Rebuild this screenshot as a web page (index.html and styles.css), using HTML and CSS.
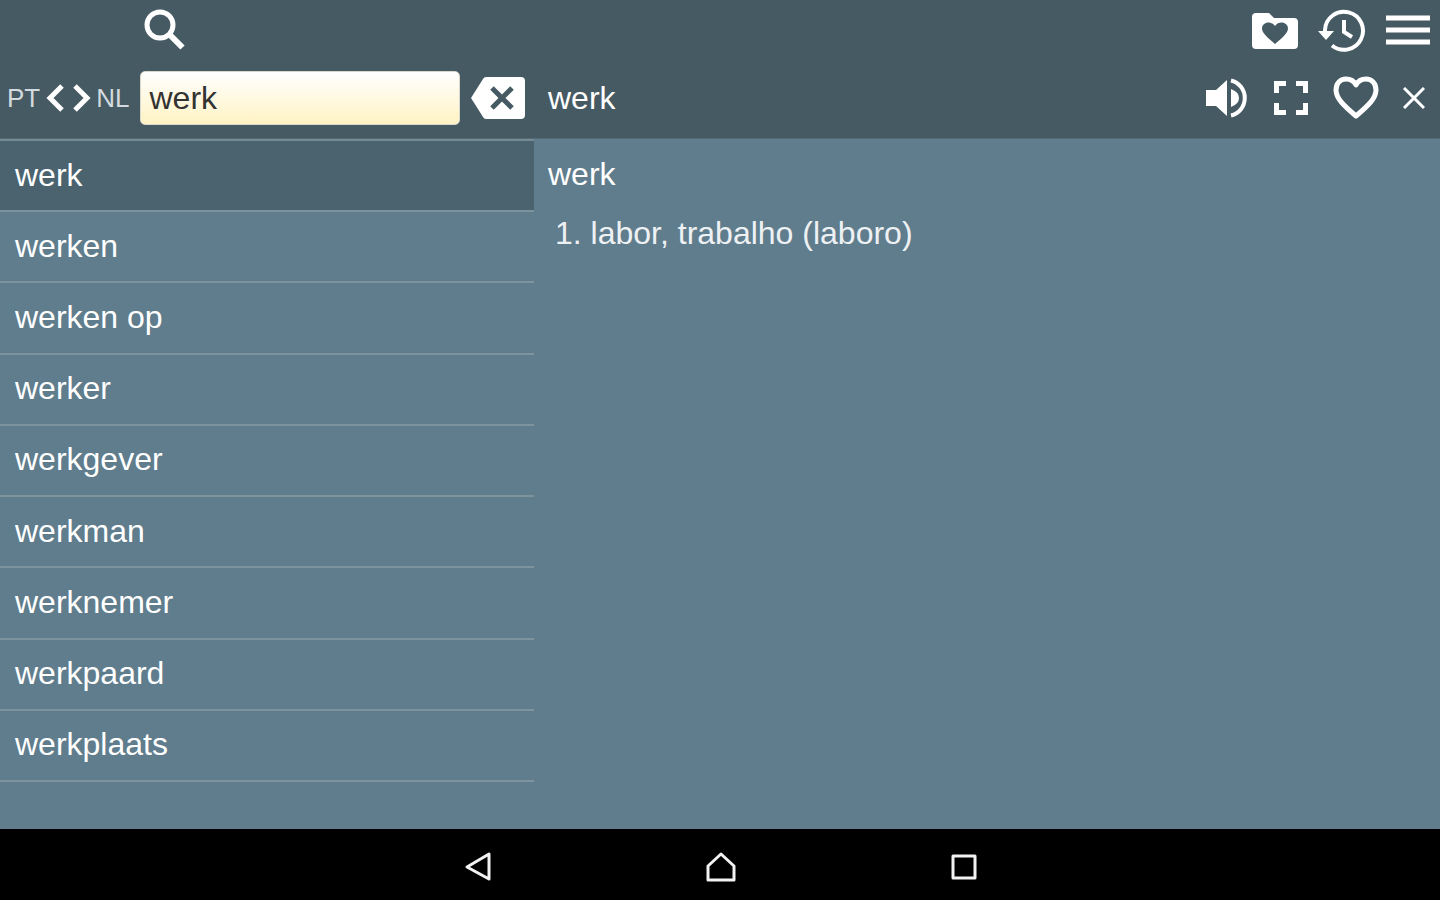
FILE: index.html
```html
<!DOCTYPE html>
<html lang="en">
<head>
    <meta charset="UTF-8">
    <meta name="viewport" content="width=device-width, initial-scale=1.0">
    <title>Dictionary PT - NL</title>
    <link rel="stylesheet" href="styles.css">
</head>
<body>
    <header class="header">
        <div class="tools">
            <button class="icon-btn search-btn" aria-label="Search">
                <svg width="44" height="44" viewBox="0 0 44 44" fill="none" stroke="#fff">
                    <circle cx="16" cy="17" r="13" stroke-width="5"/>
                    <path d="M25 26l13.500 13.500" stroke-width="6"/>
                </svg>
            </button>
        </div>

        <div class="tools tools-right">
            <button class="icon-btn" aria-label="Favorites">
                <svg width="48" height="40" viewBox="0 0 48 40">
                    <path fill="#fff" d="M6 3h13l5 5h20q4 0 4 4v23q0 4-4 4H6q-4 0-4-4V7q0-4 4-4z"/>
                    <path fill="#465a63" d="M25 34C18 28 12 23 12 18.500C12 15 15 12.500 18.500 12.500C21 12.500 23.500 13.500 25 16C26.500 13.500 29 12.500 31.500 12.500C35 12.500 38 15 38 18.500C38 23 32 28 25 34z"/>
                </svg>
            </button>
            <button class="icon-btn" aria-label="History">
                <svg width="48" height="44" viewBox="0 0 48 44" fill="none" stroke="#fff" stroke-width="4">
                    <path d="M7 24V22A19 19 0 1 1 14 37.500"/>
                    <path d="M26 12v12l8 5" stroke-width="4"/>
                    <path d="M0 23h16L8 32z" fill="#fff" stroke="none"/>
                </svg>
            </button>
            <button class="icon-btn" aria-label="Menu">
                <svg width="44" height="32" viewBox="0 0 44 32" stroke="#fff" stroke-width="5">
                    <path d="M0 4h44M0 16h44M0 28h44"/>
                </svg>
            </button>
        </div>

        <div class="search-row">
            <button class="lang-btn" aria-label="Swap languages PT NL">
                <span>PT</span>
                <svg width="46" height="28" viewBox="0 0 46 28" fill="none" stroke="#fff" stroke-width="5">
                    <path d="M17 2L5 14l12 12M30 2l12 12-12 12"/>
                </svg>
                <span>NL</span>
            </button>
            <input class="search-input" type="text" value="werk" aria-label="Word">
            <button class="icon-btn" aria-label="Clear">
                <svg width="54" height="42" viewBox="0 0 54 42">
                    <path fill="#fff" d="M15 0h35q4 0 4 4v34q0 4-4 4H15q-2 0-3-2L0 21 12 2q1-2 3-2z"/>
                    <path fill="none" stroke="#465a63" stroke-width="5" d="M21 11l20 20M41 11L21 31"/>
                </svg>
            </button>
        </div>

        <div class="word-row">
            <h1 class="word-title">werk</h1>
            <div class="word-tools">
                <button class="icon-btn" aria-label="Listen">
                    <svg width="44" height="40" viewBox="0 0 44 40">
                        <path fill="#fff" d="M0 12h10L21 2v36L10 28H0zM25 11q8 3 8 9t-8 9z"/>
                        <path fill="none" stroke="#fff" stroke-width="4" d="M25 2.500A18 18 0 0 1 25 37.500"/>
                    </svg>
                </button>
                <button class="icon-btn" aria-label="Full screen">
                    <svg width="36" height="36" viewBox="0 0 36 36" fill="none" stroke="#fff" stroke-width="5">
                        <path d="M3.500 13V3.500H13M23 3.500h9.500V13M32.500 23v9.500H23M13 32.500H3.500V23"/>
                    </svg>
                </button>
                <button class="icon-btn" aria-label="Add to favorites">
                    <svg width="48" height="44" viewBox="0 0 48 44" fill="none" stroke="#fff" stroke-width="5" stroke-linejoin="round">
                        <path d="M24 40C11 29 4 22 4 14C4 7.500 8 3 14 3C18 3 22 5 24 9C26 5 30 3 34 3C40 3 44 7.500 44 14C44 22 37 29 24 40z"/>
                    </svg>
                </button>
                <button class="icon-btn" aria-label="Close">
                    <svg width="22" height="22" viewBox="0 0 22 22" stroke="#fff" stroke-width="3">
                        <path d="M1 1l20 20M21 1L1 21"/>
                    </svg>
                </button>
            </div>
        </div>
    </header>

    <main class="content">
        <ul class="word-list">
            <li><a class="word active" href="#">werk</a></li>
            <li><a class="word" href="#">werken</a></li>
            <li><a class="word" href="#">werken op</a></li>
            <li><a class="word" href="#">werker</a></li>
            <li><a class="word" href="#">werkgever</a></li>
            <li><a class="word" href="#">werkman</a></li>
            <li><a class="word" href="#">werknemer</a></li>
            <li><a class="word" href="#">werkpaard</a></li>
            <li><a class="word" href="#">werkplaats</a></li>
        </ul>

        <article class="article">
            <h2>werk</h2>
            <p>1. labor, trabalho (laboro)</p>
        </article>
    </main>

    <nav class="navbar">
        <button class="nav-btn" aria-label="Back">
            <svg width="28" height="32" viewBox="0 0 28 32"><path d="M26 3v25L4 16z"/></svg>
        </button>
        <button class="nav-btn" aria-label="Home">
            <svg width="32" height="32" viewBox="0 0 32 32"><path d="M17 3l13 12v14H4V15z"/></svg>
        </button>
        <button class="nav-btn" aria-label="Recent apps">
            <svg width="28" height="28" viewBox="0 0 28 28"><path d="M4 3h22v22H4z"/></svg>
        </button>
    </nav>
</body>
</html>
```

FILE: styles.css
```css
* {
    box-sizing: border-box;
    margin: 0;
    padding: 0;
    font-family: "Liberation Sans", Arial, sans-serif;
}

body {
    display: flex;
    flex-direction: column;
    min-height: 100vh;
    background: #607d8d;
    color: #fff;
    font-size: 32px;
    line-height: 36px;
}

button {
    background: none;
    border: none;
    color: inherit;
    cursor: pointer;
}

svg {
    display: block;
}

h1, h2 {
    font-size: 32px;
    font-weight: normal;
}

/* Header and content share the same two columns */
.header, .content {
    display: grid;
    grid-template-columns: minmax(0, 89fr) minmax(0, 151fr);
}

.header {
    grid-template-rows: 60px 78px;
    background: #465a63;
    border-bottom: 1px solid #566a73;
}

.tools {
    display: flex;
    align-items: center;
}

.search-btn {
    padding-left: 144px;
}

.tools-right {
    justify-content: flex-end;
    gap: 20px;
    padding-right: 10px;
}

.search-row {
    display: flex;
    align-items: center;
    padding: 0 9px 2px 7px;
}

.lang-btn {
    display: flex;
    align-items: center;
    gap: 5px;
    margin-right: 11px;
    color: #d3dade;
    font-size: 26px;
}

.search-input {
    flex: 1;
    min-width: 0;
    height: 54px;
    margin-right: 11px;
    padding: 0 8px;
    border: 1px solid #d8d8cc;
    border-radius: 5px;
    background: linear-gradient(#fff, #fff3c4);
    color: #333;
    font-size: 32px;
}

.word-row {
    display: flex;
    align-items: center;
    justify-content: space-between;
    padding: 0 15px 2px 14px;
}

.word-tools {
    display: flex;
    align-items: center;
    gap: 23px;
}

.content {
    flex: 1;
}

.word-list {
    display: grid;
    grid-auto-rows: 1fr;
    padding-bottom: 47px;
    border-top: 2px solid #748b96;
    list-style: none;
}

.word {
    display: flex;
    align-items: center;
    height: 100%;
    min-height: 60px;
    padding: 0 15px 2px;
    border-bottom: 2px solid #7d949f;
    color: #fff;
    text-decoration: none;
}

.word.active {
    background: #4a636f;
}

.article {
    padding: 17px 14px;
}

.article p {
    margin-top: 23px;
    padding-left: 7px;
    color: #eef1f3;
}

.navbar {
    display: flex;
    justify-content: center;
    gap: 195px;
    height: 71px;
    padding-bottom: 4px;
    background: #000;
}

.nav-btn {
    display: flex;
    align-items: center;
    justify-content: center;
    width: 48px;
    padding-top: 8px;
}

.nav-btn svg {
    fill: none;
    stroke: #f2f2f2;
    stroke-width: 3;
    stroke-linejoin: round;
}
```
